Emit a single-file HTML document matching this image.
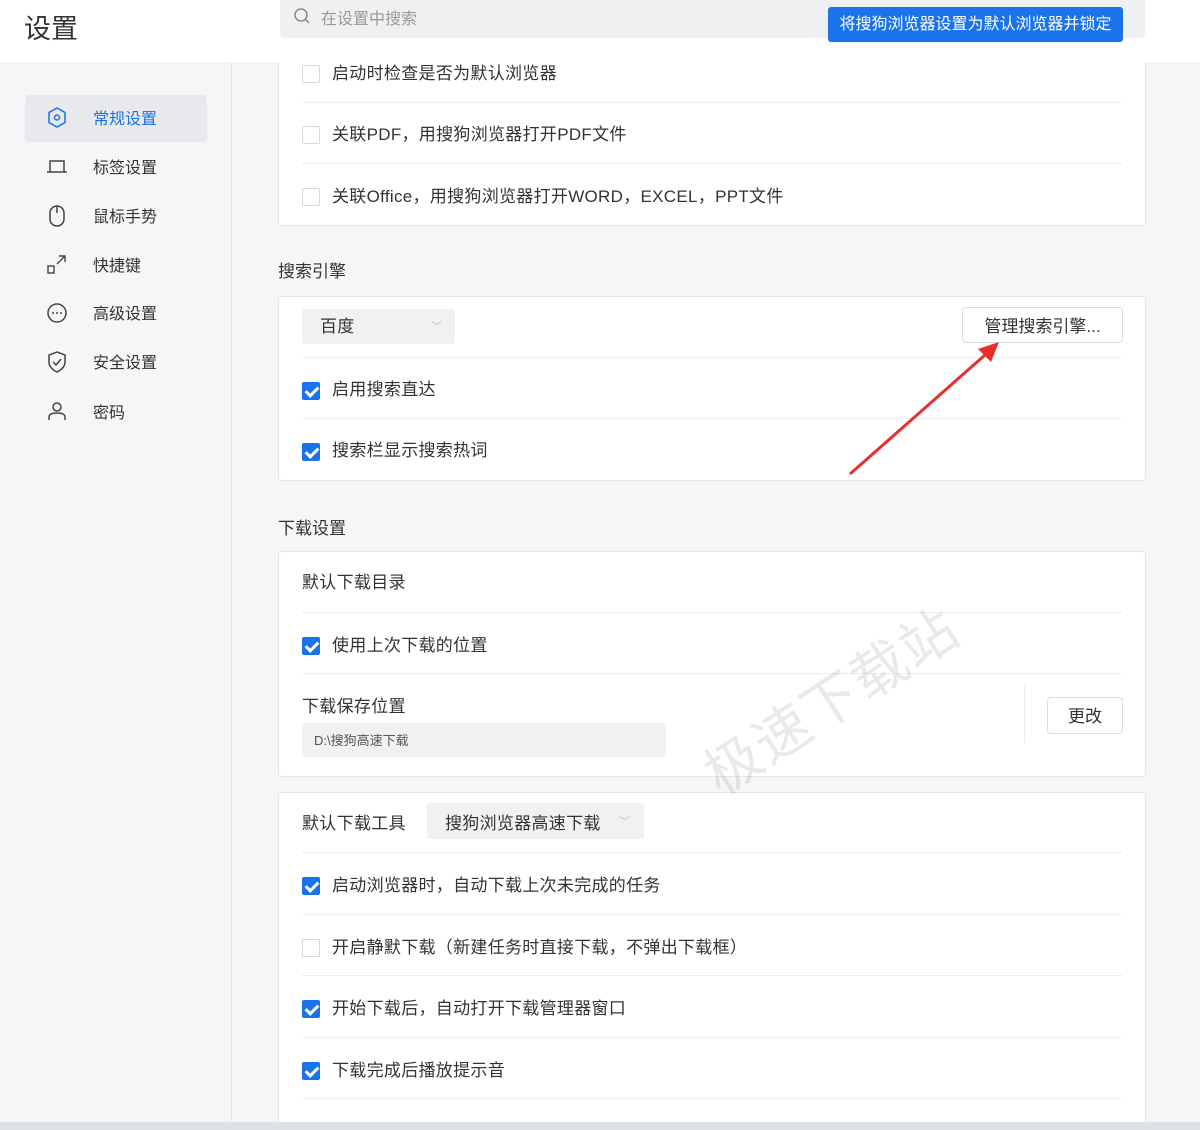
<!DOCTYPE html>
<html><head><meta charset="utf-8"><style>
*{box-sizing:border-box;margin:0;padding:0}
html,body{width:1200px;height:1130px;overflow:hidden}
body{position:relative;background:#f5f6f8;font-family:"Liberation Sans","Noto Sans CJK SC",sans-serif;color:#333}
.a{position:absolute}
.hdr{left:0;top:0;width:1200px;height:62px;background:#fff}
.side{left:231px;top:62px;width:1px;height:1068px;background:#e6e8eb}
.card{background:#fff;border:1px solid #e3e5e8;border-radius:4px}
.t{font-size:17px;line-height:20px;white-space:nowrap;letter-spacing:0.3px}
.div{height:1px;background:#ebedf0;left:302px;width:820px}
.cb{width:18px;height:18px;border:1px solid #d6d8dc;border-radius:2px;background:#fff;left:302px}
.cb.on{background:#1a73e8;border-color:#1a73e8}
.cb.on:after{content:"";position:absolute;left:5px;top:1px;width:5px;height:10px;border:solid #fff;border-width:0 3px 3px 0;transform:rotate(45deg)}
.nav{font-size:16px;left:93px;color:#333}
.sec{font-size:17px;left:278px}
</style></head><body>
<div class="a hdr"></div>
<div class="a" style="left:24px;top:7px;font-size:27px;color:#333">设置</div>
<div class="a side"></div>
<div class="a" style="left:25px;top:95px;width:182px;height:47px;background:#e7e9ec;border-radius:4px"></div>
<svg class="a" style="left:46px;top:106px" width="22" height="24" viewBox="0 0 22 24"><path d="M11 2L19 6.5V16.5L11 21L3 16.5V6.5Z" fill="none" stroke="#1a73e8" stroke-width="1.5"/><circle cx="11" cy="11.5" r="2.5" fill="none" stroke="#1a73e8" stroke-width="1.5"/></svg>
<div class="a nav" style="top:105px;color:#1a73e8">常规设置</div>
<svg class="a" style="left:46px;top:157px" width="22" height="20" viewBox="0 0 22 20"><path d="M4 4H18V15H4Z M1 15H21" fill="none" stroke="#444" stroke-width="1.5"/></svg>
<div class="a nav" style="top:154px">标签设置</div>
<svg class="a" style="left:47px;top:204px" width="20" height="24" viewBox="0 0 20 24"><rect x="3" y="2" width="14" height="20" rx="7" fill="none" stroke="#444" stroke-width="1.5"/><path d="M10 2V9" stroke="#444" stroke-width="1.5"/></svg>
<div class="a nav" style="top:203px">鼠标手势</div>
<svg class="a" style="left:46px;top:254px" width="22" height="22" viewBox="0 0 22 22"><rect x="2" y="12" width="6" height="7" fill="none" stroke="#444" stroke-width="1.4"/><path d="M11 10L19 2M13 2H19V8" fill="none" stroke="#444" stroke-width="1.4"/></svg>
<div class="a nav" style="top:252px">快捷键</div>
<svg class="a" style="left:46px;top:302px" width="22" height="22" viewBox="0 0 22 22"><circle cx="11" cy="11" r="9" fill="none" stroke="#444" stroke-width="1.5"/><circle cx="7" cy="11" r="1" fill="#444"/><circle cx="11" cy="11" r="1" fill="#444"/><circle cx="15" cy="11" r="1" fill="#444"/></svg>
<div class="a nav" style="top:300px">高级设置</div>
<svg class="a" style="left:46px;top:350px" width="22" height="24" viewBox="0 0 22 24"><path d="M11 2L19 5V12C19 17 15 20 11 22C7 20 3 17 3 12V5Z" fill="none" stroke="#444" stroke-width="1.5"/><path d="M7 12L10 15L15 9" fill="none" stroke="#444" stroke-width="1.5"/></svg>
<div class="a nav" style="top:349px">安全设置</div>
<svg class="a" style="left:46px;top:400px" width="22" height="22" viewBox="0 0 22 22"><circle cx="11" cy="7" r="4" fill="none" stroke="#444" stroke-width="1.5"/><path d="M3 20V17C3 14 6 13 11 13C16 13 19 14 19 17V20" fill="none" stroke="#444" stroke-width="1.5"/></svg>
<div class="a nav" style="top:399px">密码</div>

<div class="a card" style="left:278px;top:40px;width:868px;height:186px;border-top:none"></div>
<div class="a cb" style="top:65px"></div><div class="a t" style="left:332px;top:64px">启动时检查是否为默认浏览器</div>
<div class="a div" style="top:102px"></div>
<div class="a cb" style="top:126px"></div><div class="a t" style="left:332px;top:125px">关联PDF，用搜狗浏览器打开PDF文件</div>
<div class="a div" style="top:163px"></div>
<div class="a cb" style="top:188px"></div><div class="a t" style="left:332px;top:187px">关联Office，用搜狗浏览器打开WORD，EXCEL，PPT文件</div>
<div class="a" style="left:232px;top:38px;width:968px;height:24px;background:#fff"></div>
<div class="a" style="left:280px;top:0;width:865px;height:38px;background:#eef0f2;border-radius:0 0 4px 4px"></div>
<svg class="a" style="left:293px;top:7px" width="18" height="18" viewBox="0 0 18 18"><circle cx="8" cy="8" r="6" fill="none" stroke="#888" stroke-width="1.5"/><path d="M12.5 12.5L16 16" stroke="#888" stroke-width="1.5"/></svg>
<div class="a" style="left:321px;top:5px;font-size:16px;color:#999">在设置中搜索</div>
<div class="a" style="left:828px;top:7px;width:295px;height:35px;background:#1a73e8;border-radius:3px;color:#fff;font-size:16px;line-height:35px;text-align:center">将搜狗浏览器设置为默认浏览器并锁定</div>

<div class="a sec" style="top:257px">搜索引擎</div>
<div class="a card" style="left:278px;top:296px;width:868px;height:185px"></div>
<div class="a" style="left:302px;top:309px;width:153px;height:35px;background:#f0f1f3;border-radius:3px"></div>
<div class="a t" style="left:320px;top:317px">百度</div>
<div class="a" style="left:431px;top:318px;font-size:11px;color:#bbb">﹀</div>
<div class="a" style="left:962px;top:307px;width:161px;height:36px;border:1px solid #dcdee2;border-radius:4px;background:#fff;font-size:17px;line-height:37px;text-align:center">管理搜索引擎...</div>
<div class="a div" style="top:357px"></div>
<div class="a cb on" style="top:382px"></div><div class="a t" style="left:332px;top:380px">启用搜索直达</div>
<div class="a div" style="top:418px"></div>
<div class="a cb on" style="top:443px"></div><div class="a t" style="left:332px;top:441px">搜索栏显示搜索热词</div>
<svg class="a" style="left:840px;top:335px" width="170" height="145" viewBox="840 335 170 145"><path d="M850 474L985 355" stroke="#e8302a" stroke-width="3"/><path d="M999 342L978 349L991 362Z" fill="#e8302a"/></svg>

<div class="a sec" style="top:514px">下载设置</div>
<div class="a card" style="left:278px;top:551px;width:868px;height:226px"></div>
<div class="a t" style="left:302px;top:573px">默认下载目录</div>
<div class="a div" style="top:612px"></div>
<div class="a cb on" style="top:637px"></div><div class="a t" style="left:332px;top:636px">使用上次下载的位置</div>
<div class="a div" style="top:673px"></div>
<div class="a t" style="left:302px;top:697px">下载保存位置</div>
<div class="a" style="left:302px;top:723px;width:364px;height:34px;background:#f0f1f3;border-radius:3px;font-size:13px;line-height:36px;padding-left:12px;color:#555">D:\搜狗高速下载</div>
<div class="a" style="left:1024px;top:686px;width:1px;height:57px;background:#e6e8eb"></div>
<div class="a" style="left:1047px;top:697px;width:76px;height:37px;border:1px solid #dcdee2;border-radius:4px;font-size:17px;line-height:37px;text-align:center;background:#fff">更改</div>

<div class="a card" style="left:278px;top:792px;width:868px;height:340px"></div>
<div class="a t" style="left:302px;top:814px">默认下载工具</div>
<div class="a" style="left:427px;top:803px;width:217px;height:36px;background:#f0f1f3;border-radius:3px"></div>
<div class="a t" style="left:445px;top:814px">搜狗浏览器高速下载</div>
<div class="a" style="left:619px;top:813px;font-size:11px;color:#bbb">﹀</div>
<div class="a div" style="top:852px"></div>
<div class="a cb on" style="top:877px"></div><div class="a t" style="left:332px;top:876px">启动浏览器时，自动下载上次未完成的任务</div>
<div class="a div" style="top:914px"></div>
<div class="a cb" style="top:939px"></div><div class="a t" style="left:332px;top:938px">开启静默下载（新建任务时直接下载，不弹出下载框）</div>
<div class="a div" style="top:975px"></div>
<div class="a cb on" style="top:1000px"></div><div class="a t" style="left:332px;top:999px">开始下载后，自动打开下载管理器窗口</div>
<div class="a div" style="top:1037px"></div>
<div class="a cb on" style="top:1062px"></div><div class="a t" style="left:332px;top:1061px">下载完成后播放提示音</div>
<div class="a div" style="top:1098px"></div>
<div class="a" style="font-size:56px;color:rgba(120,120,120,0.16);transform:rotate(-33deg);transform-origin:left bottom;white-space:nowrap;top:730px;left:730px;letter-spacing:2px">极速下载站</div>
<div class="a" style="left:0;top:1122px;width:1200px;height:8px;background:#dde1e7"></div>
</body></html>
